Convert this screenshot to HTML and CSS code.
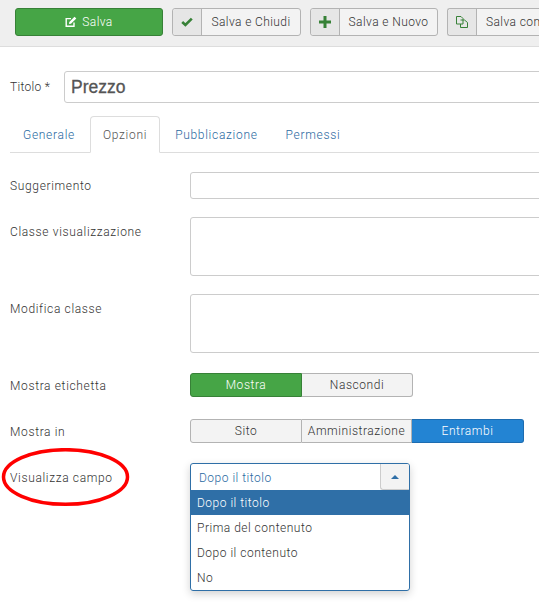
FILE: index.html
```html
<!DOCTYPE html>
<html lang="en">
<head>
    <meta charset="UTF-8">
    <meta name="viewport" content="width=device-width, initial-scale=1.0">
    <title>Campo - Prezzo</title>
    <link rel="stylesheet" href="styles.css">
</head>
<body>
    <div class="toolbar">
        <button class="btn-save">
            <svg class="icon-edit" viewBox="0 0 12 12" width="12" height="12"><path d="M9 6.5V10.3H1.2V2.6H6" fill="none" stroke="#fff" stroke-width="1.4"/><path d="M4.3 5.9L9.5 .8L11.3 2.5L6 7.7L4 8Z" fill="#fff"/></svg>
            Salva
        </button>
        <button class="btn-group btn-close">
            <span class="btn-icon">
                <svg viewBox="0 0 12 10" width="12" height="10"><path d="M1.2 5L4.4 8L10.8 1.6" fill="none" stroke="#378137" stroke-width="2.6"/></svg>
            </span>
            <span class="btn-text">Salva e Chiudi</span>
        </button>
        <button class="btn-group btn-new">
            <span class="btn-icon">
                <svg viewBox="0 0 12 12" width="12" height="12"><path d="M4.5 0h3v4.5H12v3H7.5V12h-3V7.5H0v-3h4.5z" fill="#378137"/></svg>
            </span>
            <span class="btn-text">Salva e Nuovo</span>
        </button>
        <div class="btn-group btn-copy">
            <span class="btn-icon">
                <svg viewBox="0 0 12 12" width="12" height="12"><path d="M.5.5H5L7 2.5V8H.5Z M4.5 4H8.5L11.5 6.5V11.5H4.5V8" fill="none" stroke="#378137"/></svg>
            </span>
            <span class="btn-text">Salva com</span>
        </div>
    </div>

    <div class="title-row">
        <label class="title-label">Titolo *</label>
        <input class="title-input" type="text" value="Prezzo">
    </div>

    <ul class="tabs">
        <li><a href="#">Generale</a></li>
        <li class="active"><a href="#">Opzioni</a></li>
        <li><a href="#">Pubblicazione</a></li>
        <li><a href="#">Permessi</a></li>
    </ul>

    <div class="form">
        <div class="field field-input">
            <label>Suggerimento</label>
            <input class="control" type="text">
        </div>
        <div class="field field-area">
            <label>Classe visualizzazione</label>
            <textarea class="control"></textarea>
        </div>
        <div class="field field-area field-area-last">
            <label>Modifica classe</label>
            <textarea class="control"></textarea>
        </div>
        <div class="field field-toggle">
            <label>Mostra etichetta</label>
            <div class="toggle">
                <span class="opt opt-green">Mostra</span>
                <span class="opt opt-short">Nascondi</span>
            </div>
        </div>
        <div class="field field-toggle">
            <label>Mostra in</label>
            <div class="toggle">
                <span class="opt">Sito</span>
                <span class="opt opt-short">Amministrazione</span>
                <span class="opt opt-blue">Entrambi</span>
            </div>
        </div>
        <div class="field field-select">
            <label>Visualizza campo</label>
            <div class="select">
                <div class="select-head">
                    <span>Dopo il titolo</span>
                    <span class="select-arrow"><i></i></span>
                </div>
                <ul class="select-list">
                    <li class="current">Dopo il titolo</li>
                    <li>Prima del contenuto</li>
                    <li>Dopo il contenuto</li>
                    <li>No</li>
                </ul>
            </div>
        </div>
    </div>

    <!-- hand drawn marker round the label -->
    <svg class="marker" width="131" height="60" viewBox="0 0 131 60"><ellipse cx="65.5" cy="29" rx="62" ry="27.3" fill="none" stroke="#f00" stroke-width="3.5"/></svg>
</body>
</html>
```

FILE: styles.css
```css
html {
    overflow: hidden;
}

body {
    margin: 0;
    width: 539px;
    height: 611px;
    overflow: hidden;
    position: relative;
    background: #fff;
    color: #333;
    font-family: Roboto, sans-serif;
    font-size: 12px;
    font-weight: 300;
    letter-spacing: 0.65px;
}

.toolbar {
    display: flex;
    flex-wrap: nowrap;
    height: 47px;
    padding: 8px 0 0 15px;
    box-sizing: border-box;
    background: #efefef;
    border-bottom: 1px solid #ddd;
    overflow: hidden;
    letter-spacing: 0.4px;
}

button {
    font: inherit;
    letter-spacing: inherit;
    height: 28px;
    padding: 0;
    flex-shrink: 0;
    color: #333;
    cursor: pointer;
}

.btn-save {
    width: 148px;
    margin-right: 9px;
    display: flex;
    align-items: center;
    justify-content: center;
    gap: 5px;
    color: #fff;
    background: #46a546;
    border: 1px solid #378137;
    border-radius: 3px;
}

.btn-group {
    display: flex;
    align-items: stretch;
    box-sizing: border-box;
    height: 28px;
    background: #f3f3f3;
    border: 1px solid #b3b3b3;
    border-radius: 3px;
}

.btn-close {
    width: 129px;
    margin-right: 9px;
}

.btn-new {
    width: 128px;
    margin-right: 9px;
}

.btn-copy {
    width: 92px;
    flex-shrink: 0;
    border-right: 0;
    border-radius: 3px 0 0 3px;
}

.btn-icon {
    width: 28px;
    flex-shrink: 0;
    display: flex;
    align-items: center;
    justify-content: center;
    background: #e6e6e6;
    border-right: 1px solid #b3b3b3;
    border-radius: 3px 0 0 3px;
}

.btn-text {
    flex: 1;
    line-height: 26px;
    text-align: center;
    white-space: nowrap;
}

.btn-copy .btn-text {
    text-align: left;
    padding-left: 9px;
}

.title-row {
    display: flex;
    align-items: center;
    margin-top: 24px;
    padding-left: 10px;
}

.title-label {
    width: 54px;
    flex-shrink: 0;
    white-space: nowrap;
    letter-spacing: 0.3px;
}

.title-input {
    width: 520px;
    height: 32px;
    flex-shrink: 0;
    box-sizing: border-box;
    padding: 0 6px;
    border: 1px solid #ccc;
    border-radius: 3px;
    color: #555;
    font-family: "Liberation Sans", sans-serif;
    font-size: 17.5px;
    font-weight: 400;
    letter-spacing: 0;
    -webkit-text-stroke: 0.3px #555;
}

.tabs {
    display: flex;
    list-style: none;
    margin: 13px 0 0 10px;
    padding: 0;
    height: 36px;
    border-bottom: 1px solid #ddd;
    letter-spacing: 0.7px;
}

.tabs li {
    box-sizing: border-box;
    height: 37px;
    margin-right: 2px;
    padding: 0 12px;
    line-height: 36px;
    border: 1px solid transparent;
    border-radius: 4px 4px 0 0;
}

.tabs a {
    color: #2a69a1;
    text-decoration: none;
}

.tabs .active {
    background: #fff;
    border-color: #ddd #ddd #fff;
}

.tabs .active a {
    color: #555;
}

.form {
    padding: 19px 0 0 10px;
}

.field {
    display: flex;
}

.field label {
    width: 180px;
    flex-shrink: 0;
}

.control {
    display: block;
    width: 400px;
    flex-shrink: 0;
    box-sizing: border-box;
    padding: 4px 6px;
    border: 1px solid #ccc;
    border-radius: 3px;
    resize: none;
    background: #fff;
}

.field-input {
    height: 27px;
    align-items: center;
    margin-bottom: 18px;
}

.field-input .control {
    height: 27px;
}

.field-area {
    margin-bottom: 18px;
}

.field-area-last {
    margin-bottom: 20px;
}

.field-area label {
    padding-top: 8px;
}

.field-area .control {
    height: 59px;
}

.field-toggle {
    align-items: center;
    height: 24px;
    margin-bottom: 22px;
}

.field-toggle label {
    padding-top: 2px;
}

.toggle {
    display: flex;
    height: 24px;
    letter-spacing: 0.55px;
}

.opt {
    box-sizing: border-box;
    width: 112px;
    line-height: 22px;
    text-align: center;
    white-space: nowrap;
    background: #f3f3f3;
    border: 1px solid #b3b3b3;
    border-left-width: 0;
}

.opt:first-child {
    border-left-width: 1px;
    border-radius: 3px 0 0 3px;
}

.opt:last-child {
    border-radius: 0 3px 3px 0;
}

.opt-short {
    width: 110px;
}

.opt-green {
    color: #fff;
    background: #46a546;
    border-color: #378137;
}

.opt-green + .opt-short {
    width: 111px;
}

.opt-blue {
    color: #fff;
    background: #2384d3;
    border-color: #1d6cb0;
}

.field-select {
    align-items: flex-start;
    margin-top: -2px;
}

.field-select label {
    padding-top: 8px;
}

.select {
    width: 220px;
    box-sizing: border-box;
    border: 1px solid #2f6fa7;
    border-radius: 3px;
    box-shadow: 0 3px 8px rgba(0, 0, 0, 0.18);
    overflow: hidden;
    letter-spacing: 0.5px;
}

.select-head {
    display: flex;
    justify-content: space-between;
    height: 26px;
    line-height: 28px;
    padding-left: 8px;
    color: #2a69a1;
}

.select-arrow {
    width: 28px;
    display: flex;
    align-items: center;
    justify-content: center;
    background: #f3f3f3;
    border-left: 1px solid #ccc;
    border-bottom: 1px solid #ccc;
    border-radius: 0 0 0 3px;
}

.select-arrow i {
    width: 0;
    height: 0;
    border: 4px solid transparent;
    border-top-width: 0;
    border-bottom-color: #2f6fa7;
}

.select-list {
    list-style: none;
    margin: 0;
    padding: 0;
}

.select-list li {
    height: 25px;
    line-height: 27px;
    padding-left: 6px;
}

.select-list .current {
    color: #fff;
    background: #2f6fa7;
}

.marker {
    position: absolute;
    left: 0;
    top: 448px;
}
```
